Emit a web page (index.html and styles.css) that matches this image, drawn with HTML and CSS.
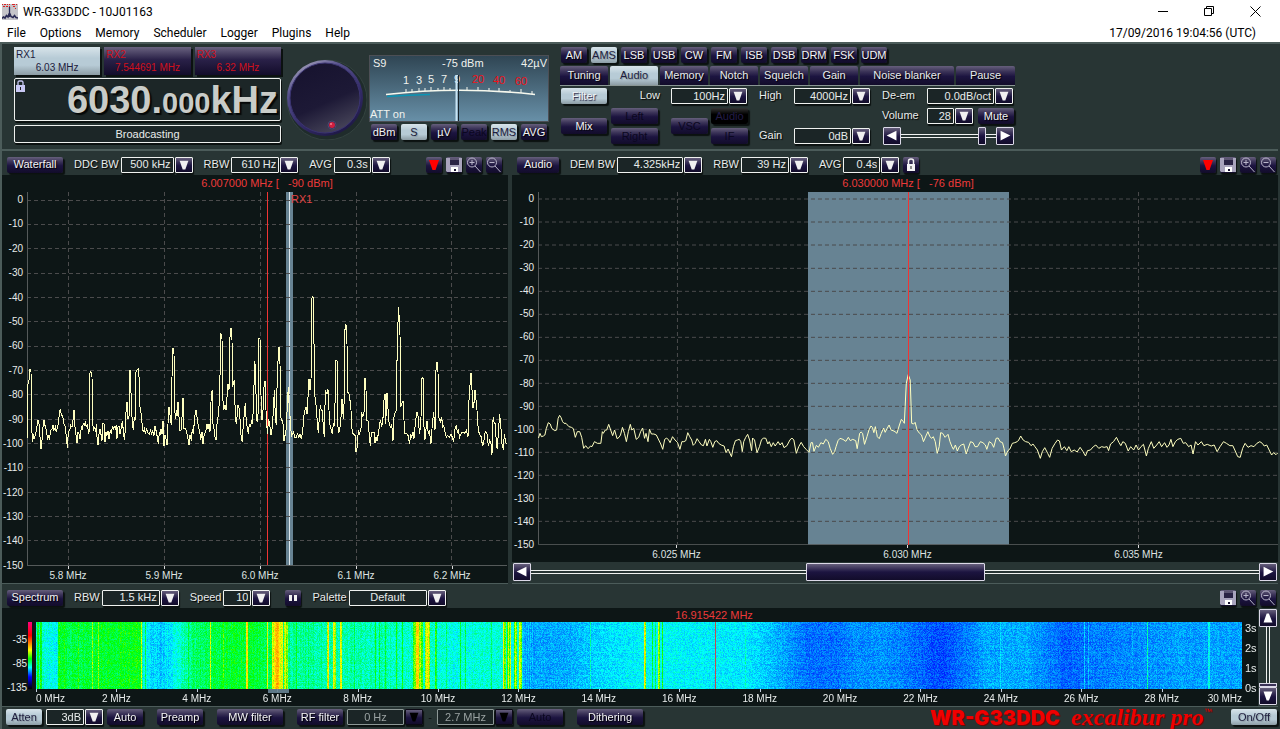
FILE: index.html
```html
<!DOCTYPE html>
<html lang="en">
<head>
<meta charset="utf-8">
<meta name="viewport" content="width=device-width, initial-scale=1">
<title>WR-G33DDC - 10J01163</title>
<link rel="stylesheet" href="styles.css">
</head>
<body>
<svg class="defs" aria-hidden="true">
  <symbol id="i-down" viewBox="0 0 18 16"><path d="M4 3h10l-3.500 10h-3z" fill="#f0f0f0"/></symbol>
  <symbol id="i-marker" viewBox="0 0 16 16"><path d="M3 3h10L9.500 13h-3z" fill="#f00"/></symbol>
  <symbol id="i-save" viewBox="0 0 16 16"><path d="M0 1h16v14H1l-1-1z" fill="#a9a4bd"/><path d="M4 1h9v7H4z" fill="#2a2345"/><path d="M4 1h9v2H4z" fill="#5d5673"/><path d="M5 10h7v5H5z" fill="#fff"/><path d="M8 12h2v2H8z" fill="#1a1433"/></symbol>
  <symbol id="i-in" viewBox="0 0 16 16"><g fill="none" stroke="#b9b5cb"><circle cx="6" cy="5.500" r="4.500"/><path d="M3.500 5.500h5M6 3v5M9 9l5.500 6"/></g></symbol>
  <symbol id="i-out" viewBox="0 0 16 16"><g fill="none" stroke="#b9b5cb"><circle cx="6" cy="5.500" r="4.500"/><path d="M3.500 5.500h5M9 9l5.500 6"/></g></symbol>
  <symbol id="i-lock" viewBox="0 0 16 16"><path d="M5.500 8V4q0-2 2.500-2t2.500 2v4" fill="none" stroke="#f4f4f4" stroke-width="1.500"/><path d="M4 7h8v7H4z" fill="#f4f4f4"/><path d="M7.500 9h1v3h-1z" fill="#222"/></symbol>
  <symbol id="i-left" viewBox="0 0 18 18"><path d="M14 3v11L3 8.500z" fill="#fff"/></symbol>
  <symbol id="i-right" viewBox="0 0 18 18"><path d="M4 3v11l11-5.500z" fill="#fff"/></symbol>
  <symbol id="i-up" viewBox="0 0 18 18"><path d="M7.500 4h2.500l4 10H4z" fill="#fff"/></symbol>
  <symbol id="i-dn" viewBox="0 0 18 18"><path d="M4 4h10l-4 10H7.500z" fill="#fff"/></symbol>
</svg>

<header class="titlebar">
  <svg class="appicon" viewBox="0 0 16 16" aria-hidden="true"><rect width="16" height="16" fill="#c5c4c9"/><path d="M0 .500h1M2 .500h2M5 .500h1M7 .500h1M10 .500h3M14 .500h1M1 2.500h2M4 2.500h2M7 2.500h1M11 2.500h2M13 4.500h1" stroke="#d22"/><path d="M7.500 3v10" stroke="#2a2a55" stroke-width="1.300"/><path d="M0 14.500l1.500-1.500 1.500 1 1.500-2.500L6 13l1-3h1l1 2.500 2 1 1.500-2 1.500 2 2 .5" fill="none" stroke="#2a2a55" stroke-width="1.600"/></svg>
  <h1 class="title">WR-G33DDC - 10J01163</h1>
  <button class="wbtn" aria-label="Minimize"><svg viewBox="0 0 11 11"><path d="M0 5.500h10" stroke="#000"/></svg></button>
  <button class="wbtn" aria-label="Restore"><svg viewBox="0 0 11 11"><path d="M.5 2.500h7v7h-7zM2.500 2.500v-2h7v7h-2" fill="none" stroke="#000"/></svg></button>
  <button class="wbtn" aria-label="Close"><svg viewBox="0 0 11 11"><path d="M.5.500l10 10M10.500.500l-10 10" stroke="#000"/></svg></button>
</header>
<nav class="menubar">
  <button>File</button><button>Options</button><button>Memory</button><button>Scheduler</button><button>Logger</button><button>Plugins</button><button>Help</button>
  <time class="clock">17/09/2016 19:04:56 (UTC)</time>
</nav>

<main class="app">
  <section class="panel receiver">
    <div class="rx">
      <div class="rxtabs">
        <button class="rxtab on"><span>RX1</span><b>6.03 MHz</b></button>
        <button class="rxtab"><span>RX2</span><b>7.544691 MHz</b></button>
        <button class="rxtab"><span>RX3</span><b>6.32 MHz</b></button>
      </div>
      <div class="freq">
        <svg class="freqlock" viewBox="0 0 9 12" aria-hidden="true"><path d="M2 6V2.500q0-1.500 1.500-1.500h2q1.500 0 1.500 1.500V6" fill="none" stroke="#c8c8f4" stroke-width="1.300"/><path d="M0 5h9v7H0z" fill="#c8c8f4"/><path d="M4 7h1v3H4z" fill="#222"/></svg>
        <output>6030.<small>000</small>kHz</output>
      </div>
      <div class="service">Broadcasting</div>
    </div>

    <svg class="knob" viewBox="0 0 82 82" role="img" aria-label="Tuning knob">
      <defs>
        <linearGradient id="rim" x1=".2" y1="0" x2=".8" y2="1"><stop offset="0" stop-color="#a9a6c0"/><stop offset=".25" stop-color="#57518c"/><stop offset=".6" stop-color="#352d6a"/><stop offset="1" stop-color="#1a1440"/></linearGradient>
        <linearGradient id="face" x1=".3" y1="0" x2=".75" y2="1"><stop offset="0" stop-color="#17132f"/><stop offset=".55" stop-color="#1d1936"/><stop offset="1" stop-color="#4a485c"/></linearGradient>
      </defs>
      <circle cx="42" cy="42" r="40" fill="#1f2b2b" stroke="#33423f"/>
      <circle cx="40" cy="40" r="38" fill="url(#rim)"/>
      <circle cx="40" cy="40" r="35" fill="url(#face)" stroke="#3a3370"/>
      <circle cx="47" cy="67" r="4" fill="#2b2750" stroke="#4c4770"/><circle cx="47" cy="67" r="3" fill="#d02040"/><circle cx="46" cy="66" r="1" fill="#f08090"/>
    </svg>

    <div class="meterbox">
      <svg class="meter" viewBox="0 0 180 67" role="img" aria-label="S meter">
        <defs><linearGradient id="mg" x1="0" y1="0" x2="0" y2="1"><stop offset="0" stop-color="#2f4553"/><stop offset="1" stop-color="#6890a8"/></linearGradient></defs>
        <rect x=".5" y=".5" width="179" height="66" fill="url(#mg)" stroke="#4c4f55"/>
        <g class="mt"><text x="4" y="12">S9</text><text x="73" y="12">-75 dBm</text><text x="178" y="12" text-anchor="end">42µV</text><text x="1" y="63">ATT on</text>
        <g text-anchor="middle"><text x="37" y="29">1</text><text x="50" y="29">3</text><text x="62" y="28">5</text><text x="75" y="28">7</text><text x="88" y="28">9</text></g></g>
        <g class="mt hot" text-anchor="middle"><text x="109" y="28">20</text><text x="130" y="29">40</text><text x="152" y="30">60</text></g>
        <path d="M17 39.500Q90 31 166 39.500" fill="none" stroke="#f6f8ee" stroke-width="1.700"/>
        <path d="M18 41.500Q40 40 61 39.500" fill="none" stroke="#0a94b4" stroke-width="1.700"/>
        <path d="M37 34v4M43 34v3M50 33v3M56 33v3M62 32v4M69 33v3M75 32v4M81 33v3M98 32v3M109 32v4M120 33v3M130 33v4M141 35v3M152 34v4M163 36v3" stroke="#f6f8ee"/>
        <path d="M89.500 20v46" stroke="#16232b"/><path d="M87.500 20v46" stroke="#c8e4f4" stroke-width="2"/>
      </svg>
      <div class="row modes"><button class="btn">dBm</button><button class="btn on">S</button><button class="btn">µV</button><button class="btn" disabled>Peak</button><button class="btn on">RMS</button><button class="btn">AVG</button></div>
    </div>

    <div class="control">
      <div class="row modes"><button class="btn">AM</button><button class="btn on">AMS</button><button class="btn">LSB</button><button class="btn">USB</button><button class="btn">CW</button><button class="btn">FM</button><button class="btn">ISB</button><button class="btn">DSB</button><button class="btn">DRM</button><button class="btn">FSK</button><button class="btn">UDM</button></div>
      <div class="tabs"><button>Tuning</button><button class="on">Audio</button><button>Memory</button><button>Notch</button><button>Squelch</button><button>Gain</button><button>Noise blanker</button><button>Pause</button></div>
      <div class="audio">
        <button class="btn on c-filter">Filter</button>
        <label class="c-low" for="low">Low</label>
        <span class="combo c-lowv"><select id="low"><option>100Hz</option></select><i><svg><use href="#i-down"/></svg></i></span>
        <label class="c-high" for="high">High</label>
        <span class="combo c-highv"><select id="high"><option>4000Hz</option></select><i><svg><use href="#i-down"/></svg></i></span>
        <label class="c-de" for="deem">De-em</label>
        <span class="combo wide c-dev"><select id="deem"><option>0.0dB/oct</option></select><i><svg><use href="#i-down"/></svg></i></span>
        <button class="btn c-mix">Mix</button>
        <button class="btn c-l" disabled>Left</button>
        <button class="btn c-r" disabled>Right</button>
        <button class="btn c-vsc" disabled>VSC</button>
        <button class="btn black c-au" disabled>Audio</button>
        <button class="btn c-if" disabled>IF</button>
        <label class="c-gain" for="gain">Gain</label>
        <span class="combo c-gainv"><select id="gain"><option>0dB</option></select><i><svg><use href="#i-down"/></svg></i></span>
        <label class="c-vol" for="vol">Volume</label>
        <span class="c-volv volrow"><span class="combo"><select id="vol"><option>28</option></select><i><svg><use href="#i-down"/></svg></i></span><button class="btn">Mute</button></span>
        <div class="slider c-sl"><button class="end" aria-label="Volume down"><svg><use href="#i-left"/></svg></button><input class="vslide" type="range" aria-label="Volume level" value="88"><button class="end" aria-label="Volume up"><svg><use href="#i-right"/></svg></button></div>
      </div>
    </div>
  </section>

  <div class="spectra">
    <section class="panel view">
      <div class="toolbar">
        <button class="btn w56">Waterfall</button>
        <label for="ddc">DDC BW</label><span class="combo f53"><select id="ddc"><option>500 kHz</option></select><i><svg><use href="#i-down"/></svg></i></span>
        <label for="rbw1">RBW</label><span class="combo f48"><select id="rbw1"><option>610 Hz</option></select><i><svg><use href="#i-down"/></svg></i></span>
        <label for="avg1">AVG</label><span class="combo f37"><select id="avg1"><option>0.3s</option></select><i><svg><use href="#i-down"/></svg></i></span>
        <span class="icons"><button class="ico" aria-label="Marker"><svg><use href="#i-marker"/></svg></button><button class="ico" aria-label="Save"><svg><use href="#i-save"/></svg></button><button class="ico" aria-label="Zoom in"><svg><use href="#i-in"/></svg></button><button class="ico" aria-label="Zoom out"><svg><use href="#i-out"/></svg></button></span>
      </div>
      <div class="plot">
        <div class="cursor">6.007000 MHz [&nbsp;&nbsp; -90 dBm]</div>
        <div class="yaxis y24"><span>0</span><span>-10</span><span>-20</span><span>-30</span><span>-40</span><span>-50</span><span>-60</span><span>-70</span><span>-80</span><span>-90</span><span>-100</span><span>-110</span><span>-120</span><span>-130</span><span>-140</span><span>-150</span></div>
        <div class="canvas">
          <svg class="graph" viewBox="82 -54 1440 1120" preserveAspectRatio="none" role="img" aria-label="DDC spectrum">
            <rect x="858" y="-54" width="21" height="1120" fill="#678393"/>
            <rect class="mid" x="867" y="-54" width="3" height="1120"/>
            <path class="grid" d="M82-30H1522M82 43H1522M82 115H1522M82 190H1522M82 262H1522M82 334H1522M82 409H1522M82 481H1522M82 553H1522M82 628H1522M82 700H1522M82 772H1522M82 847H1522M82 919H1522M82 991H1522M206-54V1066M493-54V1066M781-54V1066M1069-54V1066M1355-54V1066"/>
            <path class="axis" d="M84-54V1064H1522"/>
            <rect class="cur" x="801" y="-54" width="3" height="1118"/>
            <polyline class="trace" points="82,684 85,520 89,505 91,475 94,485 96,640 98,694 100,672 103,686 107,675 110,660 113,642 115,630 118,640 121,680 124,716 127,690 130,650 133,630 137,650 140,660 144,689 147,675 149,688 153,660 157,655 160,645 163,660 167,650 170,665 173,650 176,640 179,610 182,595 185,612 189,618 193,640 197,650 200,680 203,712 206,665 210,660 213,645 217,650 220,630 223,598 226,650 229,675 232,698 235,665 238,670 241,686 245,650 248,655 251,640 254,645 257,636 260,650 263,640 266,665 268,670 270,490 274,484 277,500 279,640 282,660 285,650 288,665 290,640 292,680 295,704 298,670 301,655 304,672 307,690 310,640 313,640 316,694 319,665 322,675 325,662 328,685 332,660 335,670 338,650 341,655 344,648 347,655 350,645 352,685 355,650 358,648 361,672 364,655 368,633 371,660 374,688 377,660 380,580 382,574 385,625 388,620 390,482 392,482 395,580 398,640 401,660 404,620 407,630 409,485 412,478 416,476 418,500 421,590 425,615 428,650 431,665 434,655 437,668 441,655 445,668 449,672 453,660 456,672 459,660 463,675 466,646 469,660 472,675 476,700 479,665 481,675 484,655 487,670 490,632 493,706 496,675 499,685 502,704 505,640 508,590 512,620 515,645 517,500 520,412 523,430 525,600 528,625 531,600 533,618 535,575 538,620 541,660 544,660 547,620 550,562 553,655 557,655 560,660 564,680 568,704 571,675 575,690 578,655 581,672 585,620 589,600 593,625 597,655 600,660 603,690 607,665 610,700 614,670 618,665 622,640 625,655 628,642 631,665 635,545 638,542 640,640 643,655 646,680 649,688 652,640 656,615 660,560 663,368 667,385 669,560 672,598 676,585 679,600 682,560 685,520 688,540 691,380 694,352 697,390 698,530 701,520 704,510 707,620 710,640 713,610 715,585 719,595 722,640 725,690 728,692 731,640 735,600 737,577 740,640 743,650 746,670 749,640 752,650 756,630 759,640 762,560 765,452 768,480 770,620 773,635 776,600 778,385 781,385 783,530 787,628 790,600 793,530 796,512 799,600 803,670 807,625 811,650 814,675 818,650 821,600 824,540 827,620 830,645 833,480 838,410 841,460 843,620 847,630 850,640 853,692 857,670 860,655 863,580 866,530 869,600 872,625 875,680 878,670 882,665 885,680 890,680 894,670 897,680 901,672 905,685 909,665 912,620 916,600 919,590 922,612 925,560 928,505 931,540 934,510 936,265 940,257 943,400 946,560 950,590 953,640 956,668 959,620 962,585 965,600 968,600 971,650 974,680 977,540 979,545 982,550 985,537 988,600 991,645 995,660 998,670 1001,640 1005,645 1008,452 1012,450 1014,640 1017,665 1020,660 1024,620 1027,565 1031,625 1034,560 1036,358 1039,342 1042,400 1044,545 1047,545 1050,560 1054,600 1057,655 1060,670 1063,672 1066,675 1069,726 1072,712 1076,660 1080,670 1084,655 1086,605 1089,620 1093,605 1096,503 1099,540 1102,630 1106,632 1109,680 1112,708 1115,668 1119,665 1123,665 1126,697 1129,680 1132,692 1136,670 1139,650 1142,630 1146,645 1149,640 1154,552 1157,552 1158,640 1162,548 1166,610 1169,645 1173,650 1176,640 1180,692 1183,620 1187,605 1190,600 1193,380 1197,290 1201,375 1203,590 1206,580 1210,572 1213,630 1216,670 1221,670 1225,675 1230,700 1233,670 1236,680 1240,665 1243,685 1247,640 1251,605 1254,605 1257,640 1260,672 1264,620 1267,505 1270,500 1273,650 1276,688 1279,655 1282,633 1286,670 1289,660 1294,700 1298,640 1302,604 1306,660 1309,480 1312,455 1315,485 1317,620 1322,635 1326,620 1329,650 1332,645 1336,665 1340,680 1344,675 1349,680 1354,672 1358,680 1362,695 1365,660 1370,645 1373,665 1376,660 1380,680 1385,668 1390,665 1395,668 1400,660 1405,680 1408,570 1411,525 1414,488 1416,510 1419,590 1422,590 1426,538 1429,570 1432,600 1436,660 1440,672 1445,680 1448,704 1452,700 1455,670 1458,665 1462,670 1466,705 1470,690 1474,700 1477,733 1479,640 1481,620 1484,640 1487,640 1490,700 1493,716 1497,650 1500,612 1503,640 1507,700 1511,718 1514,670 1517,690 1520,700"/>
          </svg>
          <span class="rxmark">RX1</span>
        </div>
        <div class="xaxis x5"><span>5.8 MHz</span><span>5.9 MHz</span><span>6.0 MHz</span><span>6.1 MHz</span><span>6.2 MHz</span></div>
      </div>
    </section>

    <section class="panel view">
      <div class="toolbar">
        <button class="btn w42">Audio</button>
        <label for="dem">DEM BW</label><span class="combo f66"><select id="dem"><option>4.325kHz</option></select><i><svg><use href="#i-down"/></svg></i></span>
        <label for="rbw2">RBW</label><span class="combo f48"><select id="rbw2"><option>39 Hz</option></select><i><svg><use href="#i-down"/></svg></i></span>
        <label for="avg2">AVG</label><span class="combo f37"><select id="avg2"><option>0.4s</option></select><i><svg><use href="#i-down"/></svg></i></span>
        <button class="ico locked" aria-label="Lock"><svg><use href="#i-lock"/></svg></button>
        <span class="icons tight"><button class="ico" aria-label="Marker"><svg><use href="#i-marker"/></svg></button><button class="ico" aria-label="Save"><svg><use href="#i-save"/></svg></button><button class="ico" aria-label="Zoom in"><svg><use href="#i-in"/></svg></button><button class="ico" aria-label="Zoom out"><svg><use href="#i-out"/></svg></button></span>
      </div>
      <div class="plot demod">
        <div class="cursor">6.030000 MHz [&nbsp;&nbsp; -76 dBm]</div>
        <div class="yaxis y23"><span>0</span><span>-10</span><span>-20</span><span>-30</span><span>-40</span><span>-50</span><span>-60</span><span>-70</span><span>-80</span><span>-90</span><span>-100</span><span>-110</span><span>-120</span><span>-130</span><span>-140</span><span>-150</span></div>
        <div class="canvas">
          <svg class="graph" viewBox="57 -474 1507 1059" preserveAspectRatio="none" role="img" aria-label="Demodulator spectrum">
            <rect x="607" y="-474" width="409" height="1059" fill="#678393"/>
            <path class="grid" d="M57-453H1564M57-384H1564M57-315H1564M57-245H1564M57-176H1564M57-107H1564M57-38H1564M57 31H1564M57 100H1564M57 169H1564M57 238H1564M57 307H1564M57 376H1564M57 445H1564M57 514H1564M341-474V585M1280-474V585"/>
            <path class="axis" d="M58-474V584H1564"/>
            <polyline class="trace" points="58,264 61,250 64,260 68,258 71,255 74,235 78,218 82,222 85,235 91,242 95,240 98,205 101,196 104,203 107,215 110,220 114,220 120,230 125,232 129,236 133,262 137,245 142,245 146,262 150,295 154,287 159,296 164,288 167,290 172,275 178,280 185,280 188,245 190,250 194,240 197,240 201,223 205,240 209,257 213,240 218,266 222,262 225,255 229,232 233,250 237,275 241,245 245,223 248,240 252,235 257,268 262,262 266,245 270,234 274,265 277,250 281,275 284,238 288,252 293,252 298,255 303,270 307,282 311,298 315,268 319,264 323,270 326,278 331,260 336,270 341,277 346,298 350,275 354,275 358,272 362,248 366,260 370,270 373,286 377,280 381,266 385,275 390,285 394,287 398,268 401,288 406,268 409,275 413,292 417,275 421,272 425,280 430,285 436,288 440,308 444,297 451,320 455,290 459,272 463,270 467,268 470,275 473,305 476,275 480,262 484,253 488,270 492,302 494,264 498,270 503,308 508,290 512,270 516,264 521,265 525,282 528,275 532,290 536,278 540,288 546,275 550,285 554,278 558,293 564,287 570,270 574,264 578,270 583,310 588,290 593,277 598,290 603,298 609,307 613,278 616,278 619,304 624,286 628,292 633,278 638,282 643,268 648,275 652,295 657,313 661,305 664,290 668,272 672,265 678,268 684,274 689,262 693,272 698,268 704,272 707,296 712,250 715,246 718,250 722,283 727,260 731,240 735,228 738,232 741,248 744,230 748,260 752,266 756,250 761,234 764,247 768,235 772,225 776,240 780,242 784,245 788,250 793,225 797,208 801,215 803,220 807,100 811,74 815,90 818,220 822,222 825,217 829,240 834,250 838,255 842,275 847,258 851,245 855,260 859,265 862,260 866,275 870,310 874,290 877,248 881,250 886,262 892,253 896,275 900,290 903,298 907,285 911,303 915,290 919,285 924,282 929,312 933,295 938,275 943,278 947,290 952,290 958,275 963,278 968,285 971,298 976,275 981,280 985,292 990,265 994,264 998,275 1003,278 1006,295 1009,318 1014,302 1018,297 1023,280 1028,278 1033,275 1036,270 1040,258 1045,270 1050,275 1056,277 1061,287 1065,282 1069,290 1074,300 1080,325 1084,305 1089,293 1095,310 1099,322 1104,295 1110,280 1115,270 1119,273 1123,300 1129,290 1134,302 1138,290 1143,305 1149,300 1155,306 1161,292 1167,305 1172,318 1176,302 1182,300 1188,290 1193,285 1199,295 1205,290 1210,292 1216,290 1219,302 1223,282 1229,275 1235,262 1240,277 1244,287 1248,275 1253,280 1259,303 1264,290 1270,300 1275,285 1280,300 1285,290 1290,283 1296,318 1300,295 1306,275 1311,295 1317,285 1322,275 1327,290 1333,278 1338,292 1342,285 1346,268 1350,290 1355,275 1360,268 1366,265 1371,280 1376,278 1382,290 1387,285 1391,312 1396,275 1401,285 1408,275 1413,287 1420,283 1428,288 1434,285 1440,305 1446,290 1453,275 1459,280 1466,287 1472,287 1476,300 1482,320 1487,322 1492,295 1497,280 1503,292 1509,287 1515,290 1521,280 1527,275 1532,280 1536,288 1541,285 1546,300 1551,315 1555,308 1560,314 1564,308"/>
            <rect class="cur" x="810" y="-474" width="2.040" height="1059"/>
          </svg>
        </div>
        <div class="xaxis x3"><span>6.025 MHz</span><span>6.030 MHz</span><span>6.035 MHz</span></div>
      </div>
      <div class="slider scroll"><button class="end" aria-label="Scroll left"><svg><use href="#i-left"/></svg></button><input class="hslide" type="range" aria-label="Frequency scroll" value="50"><button class="end" aria-label="Scroll right"><svg><use href="#i-right"/></svg></button></div>
    </section>
  </div>

  <section class="panel wideband">
    <div class="toolbar">
      <button class="btn w56">Spectrum</button>
      <label for="rbw3">RBW</label><span class="combo f58"><select id="rbw3"><option>1.5 kHz</option></select><i><svg><use href="#i-down"/></svg></i></span>
      <label for="speed">Speed</label><span class="combo f28"><select id="speed"><option>10</option></select><i><svg><use href="#i-down"/></svg></i></span>
      <button class="ico pause" aria-label="Pause"><svg viewBox="0 0 16 16"><path d="M4 5h3v6H4zM9 5h3v6H9z" fill="#f2f2f2"/></svg></button>
      <label for="pal">Palette</label><span class="combo f78 center"><select id="pal"><option>Default</option></select><i><svg><use href="#i-down"/></svg></i></span>
      <span class="icons tight"><button class="ico" aria-label="Save"><svg><use href="#i-save"/></svg></button><button class="ico" aria-label="Zoom in"><svg><use href="#i-in"/></svg></button><button class="ico" aria-label="Zoom out"><svg><use href="#i-out"/></svg></button></span>
    </div>
    <div class="fall">
      <div class="fallplot">
        <div class="cursor">16.915422 MHz</div>
        <div class="levels"><span>-35</span><span>-85</span><span>-135</span></div>
        <div class="scalebar"></div>
        <canvas id="waterfall" width="1206" height="67" role="img" aria-label="Wideband waterfall, 0 to 30 MHz"></canvas>
        <div class="secs"><span>3s</span><span>2s</span><span>1s</span><span>0s</span></div>
        <div class="ticks"><i></i></div>
        <div class="mhz"><span>0 MHz</span><span>2 MHz</span><span>4 MHz</span><span>6 MHz</span><span>8 MHz</span><span>10 MHz</span><span>12 MHz</span><span>14 MHz</span><span>16 MHz</span><span>18 MHz</span><span>20 MHz</span><span>22 MHz</span><span>24 MHz</span><span>26 MHz</span><span>28 MHz</span><span>30 MHz</span></div>
      </div>
      <div class="vscroll"><button class="end" aria-label="Scroll up"><svg><use href="#i-up"/></svg></button><input class="tslide" type="range" aria-label="Waterfall time" value="100"><button class="end" aria-label="Scroll down"><svg><use href="#i-dn"/></svg></button></div>
    </div>
  </section>

  <footer class="bottom">
    <button class="btn on w36">Atten</button>
    <span class="combo f38"><select aria-label="Attenuation"><option>3dB</option></select><i><svg><use href="#i-down"/></svg></i></span>
    <button class="btn w36">Auto</button>
    <button class="btn w46 gap">Preamp</button>
    <button class="btn w66 gap">MW filter</button>
    <button class="btn w46 gap">RF filter</button>
    <span class="combo f56 center off"><select aria-label="RF filter low" disabled><option>0 Hz</option></select><i><svg><use href="#i-down"/></svg></i></span>
    <span class="dash">-</span>
    <span class="combo f56 center off"><select aria-label="RF filter high" disabled><option>2.7 MHz</option></select><i><svg><use href="#i-down"/></svg></i></span>
    <button class="btn w46" disabled>Auto</button>
    <button class="btn w66 gap">Dithering</button>
    <span class="brand"><b>WR-G33DDC</b><em>excalibur pro</em><sup>™</sup></span>
    <button class="btn on w46">On/Off</button>
  </footer>
</main>
<script src="script.js"></script>
</body>
</html>
```
FILE: styles.css
```css
* { box-sizing: border-box; }
body {
  margin: 0;
  min-height: 100vh;
  display: flex;
  flex-direction: column;
  background: #fff;
  font: 11px/13px "Liberation Sans", Arial, sans-serif;
  color: #e8eceb;
}
button, select, input { font: inherit; color: inherit; margin: 0; padding: 0; border: 0; border-radius: 0; background: none; }
.defs { display: none; }

/* window chrome */
.titlebar { display: flex; align-items: center; height: 23px; padding: 0 2px; color: #000; }
.appicon { width: 16px; height: 16px; margin-right: 5px; }
.title { flex: 1; margin: 0; font: 12px/16px Roboto, "Open Sans", sans-serif; }
.wbtn { width: 46px; height: 20px; display: grid; place-items: center; }
.wbtn svg { width: 11px; height: 11px; }
.menubar { display: flex; align-items: center; height: 19px; padding: 0 24px 0 0; color: #000; font: 12px/16px Roboto, "Open Sans", sans-serif; }
.menubar button { padding: 0 7px; }
.clock { margin-left: auto; }

/* application frame */
.app { flex: 1; display: flex; flex-direction: column; padding-right: 2px; background: #283534; border-left: 2px solid #4c5c5a; border-top: 2px solid #4c5c5a; }
.panel { border: 0 solid #4c5c5a; }
.row { display: flex; gap: 4px; }

.btn, .tabs button, .ico, .end, .combo i {
  background: linear-gradient(#665f7c, #3a3257 30%, #1c1440 55%, #120c2a);
}
.btn {
  height: 16px;
  border-radius: 2px;
  color: #f4f4f4;
  box-shadow: 2px 2px 1px #0b1110;
  white-space: nowrap;
  text-shadow: 1px 1px 1px #000;
}
.btn.on, .tabs button.on, .rxtab.on {
  background: linear-gradient(#d8e4ea, #b7cbd6 40%, #b7cbd6 65%, #8c9ca4);
  color: #1d1c3c;
  text-shadow: 1px 1px 1px #8a98a0;
}
.btn.c-filter.on { color: #f2f6f8; text-shadow: 1px 1px 1px #1d1c3c; }
.btn:disabled { color: #0b0720; text-shadow: none; }
.btn.black { background: linear-gradient(#333, #000 40%); color: #241d48; }
.modes .btn { width: 26px; flex: none; }

/* receiver section */
.receiver { display: flex; padding: 3px 12px 0; min-height: 107px; border-bottom-width: 2px; margin-bottom: 3px; }
.rx { width: 267px; display: flex; flex-direction: column; }
.rxtabs { display: flex; gap: 4px; }
.rxtab { flex: 1; height: 28px; text-align: left; font-size: 10px; line-height: 13px; color: #d0101c; background: linear-gradient(#6a6380, #2a2148 45%, #120c2a); box-shadow: 2px 2px 0 #0b1110; }
.rxtab span { display: block; padding-left: 2px; }
.rxtab b { display: block; font-weight: normal; text-align: center; }
.rxtab.on { text-shadow: none; }
.freq { display: flex; justify-content: space-between; margin-top: 3px; height: 43px; border: 1px solid #eef0ee; border-radius: 2px; background: #1c2627; box-shadow: 1px 2px 0 #0b1110; }
.freqlock { width: 9px; height: 12px; margin: 1px; }
.freq output { font: bold 38px/42px "Liberation Sans", Arial, sans-serif; color: #c9ccc8; text-shadow: 2px 2px 1px #050808; padding-right: 2px; }
.freq small { font-size: 29px; }
.service { margin-top: 4px; height: 18px; line-height: 17px; text-align: center; border: 1px solid #eef0ee; border-radius: 2px; background: #1c2627; box-shadow: 1px 2px 0 #0b1110; }
.knob { width: 82px; height: 82px; margin: 11px 0 0 4px; flex: none; }
.meterbox { width: 180px; margin: 8px 0 0 2px; flex: none; }
.meter { display: block; width: 180px; height: 67px; }
.mt { font-size: 11px; fill: #f0f2ee; }
.hot { fill: #f01018; }
.meterbox .row { margin: 2px 0 0 2px; }
.control { margin-left: 11px; width: 455px; }
.control .modes { padding-left: 1px; }
.tabs { display: flex; gap: 2px; margin-top: 3px; border-bottom: 1px solid #8a9694; }
.tabs button { flex: 0 0 48px; height: 19px; border-radius: 2px 2px 0 0; text-shadow: 1px 1px 1px #000; }
.tabs button:nth-child(7) { flex-basis: 94px; }
.tabs button:nth-child(8) { flex: 1; }
.audio {
  display: grid;
  grid-template-columns: 50px 60px 88px 35px 88px 45px 87px;
  grid-template-rows: 20px 20px 18px;
  margin: 2px 0 0 1px;
  align-items: start;
}
.audio label, .toolbar label { text-shadow: 1px 1px 1px #000; line-height: 15px; white-space: nowrap; }
.c-filter, .c-mix { width: 46px; }
.c-filter { grid-area: 1 / 1; }
.c-low { grid-area: 1 / 2; justify-self: end; margin-right: 11px; }
.c-lowv { grid-area: 1 / 3; }
.c-high { grid-area: 1 / 4; }
.c-highv { grid-area: 1 / 5; }
.c-de { grid-area: 1 / 6; }
.c-dev { grid-area: 1 / 7; }
.c-mix { grid-area: 2 / 1 / 4 / 2; }
.c-l { grid-area: 2 / 2; width: 47px; }
.c-r { grid-area: 3 / 2; width: 47px; }
.c-vsc { grid-area: 2 / 3 / 4 / 4; width: 37px; }
.audio .c-mix, .audio .c-vsc { margin-top: 10px; }
.c-au { grid-area: 2 / 3; }
.c-if { grid-area: 3 / 3; }
.c-au, .c-if { width: 37px; margin-left: 40px; }
.c-gain { grid-area: 3 / 4; }
.c-gainv { grid-area: 3 / 5; }
.c-vol { grid-area: 2 / 6; }
.c-volv { grid-area: 2 / 7; }
.c-sl { grid-area: 3 / 6 / 4 / 8; margin-left: 1px; }
.volrow { display: flex; justify-content: space-between; }
.volrow .btn { width: 36px; }
.volrow select { width: 27px; }
.c-lowv select, .c-highv select, .c-gainv select { width: 57px; }
.c-dev select { width: 67px; }

/* drop-downs */
.combo { display: inline-flex; gap: 1px; flex: none; }
.combo select {
  appearance: none;
  height: 16px;
  padding: 0 2px;
  border: 1px solid #f0f2f0;
  border-radius: 1px;
  background: #1b2526;
  text-align-last: right;
  box-shadow: 1px 2px 1px #0b1110;
  opacity: 1;
}
.combo i { width: 18px; height: 16px; border: 1px solid #f0f2f0; border-radius: 1px; box-shadow: 1px 2px 1px #0b1110; }
.combo svg { display: block; width: 16px; height: 14px; }
.combo.center select { text-align-last: center; }
.combo.off select { color: #9aa2a2; border-color: #8d9896; }
.combo.off i { border-color: #0b0914; }
.combo.off svg { filter: brightness(0); }
.f28 select { width: 28px; }
.f37 select { width: 37px; }
.f38 select { width: 38px; }
.f48 select { width: 48px; }
.f53 select { width: 53px; }
.f56 select { width: 57px; }
.f58 select { width: 58px; }
.f66 select { width: 66px; }
.f78 select { width: 78px; }
.w36 { width: 36px; }
.w42 { width: 42px; }
.w46 { width: 46px; }
.w56 { width: 56px; }
.w66 { width: 66px; }

/* toolbars */
.toolbar { display: flex; align-items: center; height: 21px; padding: 0 6px 0 5px; }
.toolbar label { margin: 0 2px 0 11px; }
.ico { width: 16px; height: 16px; border-radius: 2px; box-shadow: 1px 2px 1px #0b1110; flex: none; }
.ico svg { display: block; width: 16px; height: 16px; }
.locked { margin-left: 4px; }
.pause { margin-left: 15px; }
.icons { display: flex; gap: 4px; margin-left: auto; }
.icons.tight { margin-right: -4px; }

/* spectrum views */
.spectra { flex: 1; display: grid; grid-template-columns: 506fr 766fr; gap: 4px; min-height: 330px; margin-bottom: 3px; }
.view { display: flex; flex-direction: column; min-width: 0; border-bottom-width: 1px; }
.plot { flex: 1; display: grid; grid-template: 17px 1fr 17px / 25px 1fr; background: #0d1616; padding-right: 1px; }
.plot.demod { grid-template-columns: 26px 1fr; padding-right: 0; }
.cursor { grid-column: 2; text-align: center; line-height: 17px; color: #ec3a3a; white-space: pre; }
.yaxis { display: flex; flex-direction: column; justify-content: space-between; grid-row: 2; margin-bottom: -6px; text-align: right; }
.yaxis span { line-height: 12px; height: 12px; font-size: 10px; padding-right: 4px; display: flex; justify-content: flex-end; }
.y24 { margin-top: 2px; }
.y23 { margin-top: 1px; }
.canvas { position: relative; grid-area: 2 / 2; min-height: 0; }
.graph { position: absolute; inset: 0; width: 100%; height: 100%; shape-rendering: crispEdges; }
.graph path, .graph polyline { fill: none; vector-effect: non-scaling-stroke; stroke-width: 1px; }
.grid { stroke: #4b4b4c; stroke-dasharray: 4 3; }
.axis { stroke: #555a5a; }
.mid { fill: #dfe8ec; }
.cur { fill: #f03434; }
.trace { stroke: #ffffc0; }
.rxmark { position: absolute; left: 55%; top: 1px; color: #e04444; }
.xaxis { grid-column: 2; display: flex; font-size: 10px; line-height: 20px; }
.xaxis span { flex: 1; text-align: center; color: #dfe3e2; background: linear-gradient(#ddd, #ddd) center top / 1px 3px no-repeat; }
.x5 { margin: 0 7px 0 -7px; }
.x3 { margin: 0 24px 0 23px; }

/* sliders */
.slider { display: flex; align-items: center; }
.end { width: 18px; height: 18px; border: 1px solid #dcd9e8; border-radius: 1px; flex: none; }
.end svg { display: block; width: 16px; height: 16px; }
.slider input { appearance: none; flex: 1; min-width: 0; height: 18px; background: linear-gradient(#f0f2f0 0 1px, transparent 1px 3px, #f0f2f0 3px 4px) center / 100% 4px no-repeat; }
.slider input::-webkit-slider-thumb { appearance: none; width: 8px; height: 18px; border: 1px solid #dcd9e8; border-radius: 1px; background: linear-gradient(#665f7c, #1c1440 50%, #120c2a); }
.slider .hslide::-webkit-slider-thumb { width: 179px; }
.c-sl { margin-top: -1px; }
.scroll { height: 21px; padding: 0 1px 2px; }

/* wideband waterfall */
.fall { display: flex; background: #0d1616; border-bottom: 1px solid #4c5c5a; }
.fallplot { flex: 1; display: grid; grid-template: 14px 67px 17px / 26px 4px 4px 1fr 16px; }
.fallplot .cursor { grid-area: 1 / 4; text-align: left; padding-left: 53%; line-height: 14px; }
.levels { grid-area: 2 / 1; display: flex; flex-direction: column; justify-content: space-between; align-items: flex-end; margin: 12px 0 -5px; font-size: 10px; line-height: 12px; padding-right: 1px; }
.scalebar { grid-area: 2 / 2; background: linear-gradient(#ff0080, #f00 20%, #f80 32%, #ff0 42%, #0f0 55%, #0ff 68%, #00f 82%, #000); }
#waterfall { grid-area: 2 / 4; width: 100%; height: 67px; display: block; image-rendering: pixelated; }
.secs { grid-area: 2 / 5; display: flex; flex-direction: column; justify-content: space-between; margin: 0 0 -5px; padding-left: 3px; line-height: 12px; }
.ticks { grid-area: 3 / 4; height: 4px; background: repeating-linear-gradient(90deg, #c4cedd 0 1px, transparent 1px 6.667%) 0 0 / 100% 3px no-repeat; }
.ticks i { display: block; width: 21px; height: 4px; margin-left: 19.200%; background: #678393; opacity: .9; }
.mhz { grid-area: 3 / 4; display: flex; font-size: 10px; line-height: 20px; }
.mhz span { flex: 1 1 0; min-width: 0; text-align: center; white-space: nowrap; }
.mhz span:first-child { flex-grow: .5; text-align: left; }
.mhz span:last-child { flex-grow: .5; display: flex; justify-content: flex-end; }
.vscroll { width: 20px; display: flex; flex-direction: column; align-items: center; background: #283534; padding-top: 1px; }
.vscroll input { appearance: none; writing-mode: vertical-lr; width: 18px; height: 60px; background: linear-gradient(90deg, #f0f2f0 0 1px, transparent 1px 3px, #f0f2f0 3px 4px) center / 4px 100% no-repeat; }
.vscroll input::-webkit-slider-thumb { appearance: none; width: 18px; height: 4px; border: 1px solid #dcd9e8; background: #3a3257; }

/* footer */
.bottom { display: flex; align-items: center; height: 20px; margin-bottom: 2px; padding: 0 1px 0 4px; gap: 4px; }
.bottom > .btn { flex: none; }
.bottom .gap { margin-left: 10px; }
.dash { width: 6px; text-align: center; color: #0b1110; }
.brand { display: flex; align-items: baseline; margin-left: auto; margin-right: 15px; color: #f00000; line-height: 18px; white-space: nowrap; text-shadow: 1px 1px 0 #6a0808; height: 19px; }
.brand b { font: 900 20px/18px Inter, "Liberation Sans", sans-serif; }
.brand em { font: italic bold 24px/18px "Liberation Serif", serif; margin-left: 11px; }
.brand sup { font-size: 8px; line-height: 8px; align-self: flex-start; }
```
FILE: script.js
```js
// Paints the wideband waterfall: one signal level per column, plus receiver noise.
const canvas = document.getElementById('waterfall');
const ctx = canvas.getContext('2d');
const W = canvas.width, H = canvas.height;

const palette = [[0, 0, 0, 0], [0.14, 0, 0, 255], [0.35, 0, 255, 255], [0.5, 0, 255, 0], [0.62, 255, 255, 0], [0.8, 255, 90, 0], [1, 255, 0, 128]];

// noise floor: [column, level]
const floor = [[0, .39], [20, .34], [23, .46], [60, .475], [104, .49], [107, .36], [122, .3], [138, .35], [158, .44], [190, .475], [215, .475], [235, .45], [255, .42], [300, .4], [350, .39], [400, .37], [415, .36], [455, .37], [484, .36], [488, .28], [530, .28], [565, .32], [610, .35], [680, .34], [715, .33], [740, .29], [770, .235], [800, .23], [820, .26], [850, .26], [880, .23], [905, .2], [920, .225], [950, .28], [990, .28], [1030, .22], [1060, .245], [1110, .26], [1140, .27], [1206, .275]];

// carriers: [first column, width, added level]
const carriers = [[1, 2, .14], [4, 2, .12], [22, 2, .06], [28, 1, .06], [42, 1, .08], [56, 1, .1], [62, 1, .09], [105, 1, .16], [109, 1, .1], [152, 1, .06], [174, 1, .14], [187, 1, .06], [210, 2, .15], [231, 1, .18], [236, 2, .16], [238, 6, .24], [244, 3, .18], [248, 4, .16], [260, 1, .1], [272, 1, .06], [291, 2, .23], [297, 3, .2], [304, 2, .2], [318, 1, .06], [339, 1, .08], [343, 1, .07], [349, 1, .1], [360, 1, .08], [366, 1, .1], [377, 3, .2], [380, 5, .27], [385, 2, .18], [389, 5, .25], [399, 2, .13], [410, 1, .08], [424, 1, .14], [429, 1, .06], [455, 1, .06], [467, 3, .24], [471, 4, .2], [478, 3, .2], [483, 3, .22], [554, 1, .09], [608, 2, .26], [616, 1, .12], [619, 1, .1], [622, 2, .24], [626, 1, .14], [709, 1, .05], [964, 1, .05], [1048, 1, .08], [1052, 1, .06], [1096, 1, .04], [1111, 1, .14], [1172, 2, .09]];

let seed = 33;
function noise() {
  seed = (seed * 1664525 + 1013904223) >>> 0;
  return seed / 4294967296 - 0.5;
}

function levelAt(x) {
  let i = 1;
  while (i < floor.length - 1 && floor[i][0] < x) i++;
  const [x0, a] = floor[i - 1], [x1, b] = floor[i];
  return a + (b - a) * (x - x0) / (x1 - x0);
}

function colour(v) {
  v = Math.min(1, Math.max(0, v));
  let i = 1;
  while (palette[i][0] < v) i++;
  const p = palette[i - 1], q = palette[i], t = (v - p[0]) / (q[0] - p[0]);
  return [1, 2, 3].map(k => p[k] + (q[k] - p[k]) * t);
}

const levels = Array.from({ length: W }, (_, x) => levelAt(x) + noise() * (x < 500 ? 0.04 : 0.012));
for (const [start, width, gain] of carriers)
  for (let x = start; x < start + width; x++) levels[x] += gain * (0.95 + noise() * 0.5);

const image = ctx.createImageData(W, H);
for (let y = 0; y < H; y++) {
  const line = noise() * 0.018;
  for (let x = 0; x < W; x++) {
    const rgb = colour(levels[x] + line + noise() * 0.08);
    const o = (y * W + x) * 4;
    image.data.set([rgb[0], rgb[1], rgb[2], 255], o);
  }
}
ctx.putImageData(image, 0, 0);

// tuning cursor at 16.915422 MHz
ctx.fillStyle = '#c05050';
ctx.fillRect(679, 0, 1, H);
```
